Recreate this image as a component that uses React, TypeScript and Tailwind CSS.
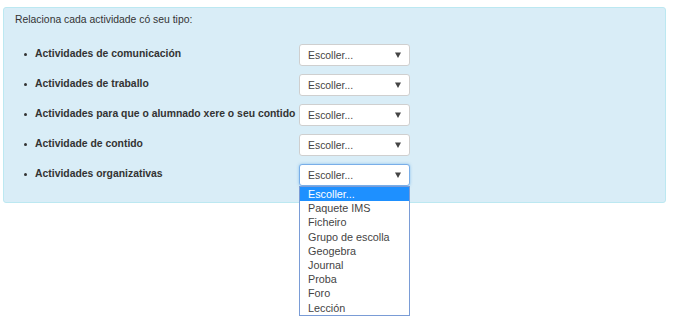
import React from 'react';

const ACTIVIDADES = [
    'Actividades de comunicación',
    'Actividades de traballo',
    'Actividades para que o alumnado xere o seu contido',
    'Actividade de contido',
    'Actividades organizativas',
];

const OPCIONS = [
    'Escoller...',
    'Paquete IMS',
    'Ficheiro',
    'Grupo de escolla',
    'Geogebra',
    'Journal',
    'Proba',
    'Foro',
    'Lección',
];

const Arrow = () => (
    <svg width="6" height="6" viewBox="0 0 6 6" className="shrink-0">
        <path d="M0 0.5 L6 0.5 L3 6 Z" fill="#444" />
    </svg>
);

const Select = ({ open }: { open?: boolean }) => (
    <div className="relative w-[111px] h-[22px] shrink-0">
        <div
            className={`flex items-center justify-between h-full bg-white rounded-[3px] border pl-[8px] pr-[8px] ${open
                ? 'border-[#79aee8] shadow-[0_0_3px_rgba(102,175,233,0.7)]'
                : 'border-[#cfcfcf]'
                }`}
        >
            <span className="text-[10.4px] text-[#444] leading-[12px] pt-[1px]">Escoller...</span>
            <Arrow />
        </div>

        {/* lista despregada */}
        {open && (
            <ul className="absolute left-0 top-[22px] w-[111px] bg-white border border-[#7a9cd6] z-10">
                {OPCIONS.map((op, i) => (
                    <li
                        key={op}
                        className={`pl-[8px] text-[10.8px] leading-[14.2px] ${i === 0 ? 'bg-[#1e90ff] text-white' : 'text-[#444]'
                            }`}
                    >
                        {op}
                    </li>
                ))}
            </ul>
        )}
    </div>
);

export default function App() {
    return (
        <div className="min-h-[321px] pt-[7px] pl-[3px] w-[666px] font-['Liberation_Sans',Arial,sans-serif] text-[#333]">
            <div className="relative bg-[#d9edf7] border border-[#bce8f1] rounded-[3px] pl-[11px] pt-[6px] pb-[8px]">
                <p className="text-[10.4px] leading-[12px]">Relaciona cada actividade có seu tipo:</p>

                <ul className="mt-[18px]">
                    {ACTIVIDADES.map((act, i) => (
                        <li key={act} className="flex items-start h-[30px]">
                            <span className="w-[18px] flex justify-center pt-[9px] pl-[2px]">
                                <span className="size-[3px] rounded-full bg-[#333]" />
                            </span>
                            <span className="w-[266px] pl-[2px] pt-[4px] text-[10.4px] leading-[12px] font-bold whitespace-nowrap">
                                {act}
                            </span>
                            <Select open={i === ACTIVIDADES.length - 1} />
                        </li>
                    ))}
                </ul>
            </div>
        </div>
    );
}
